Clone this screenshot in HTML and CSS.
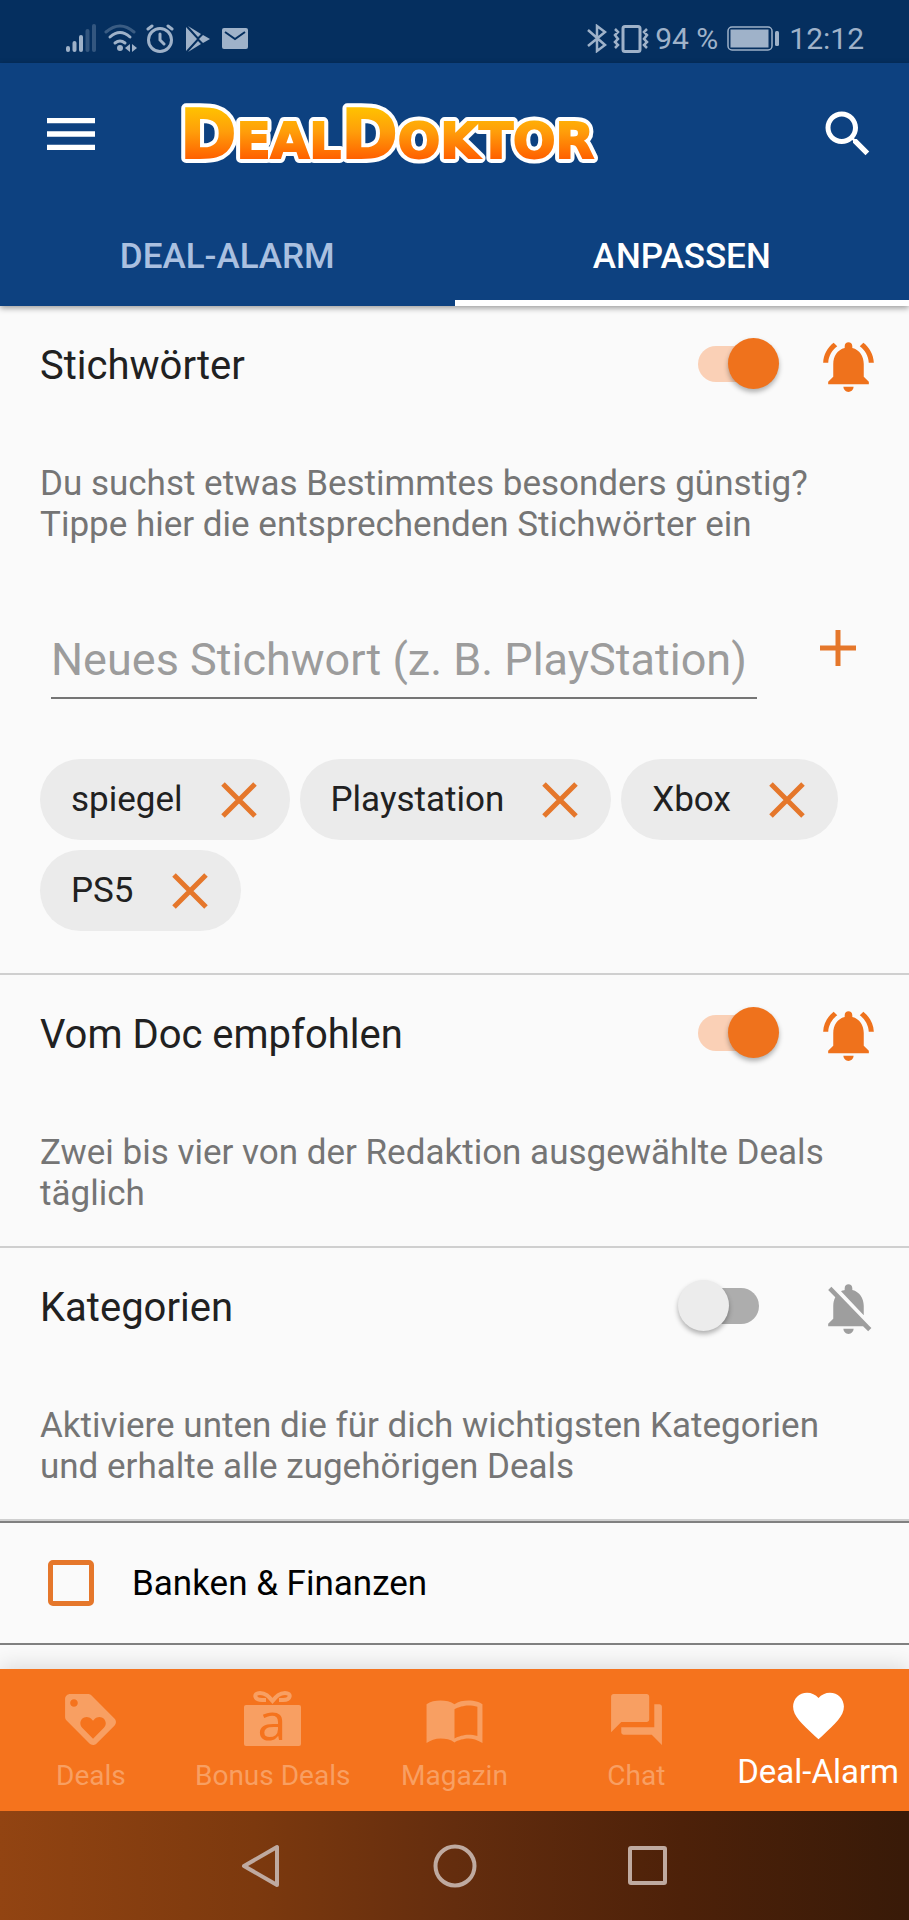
FILE: index.html
```html
<!DOCTYPE html>
<html lang="de">
<head>
<meta charset="utf-8">
<meta name="viewport" content="width=device-width, initial-scale=1">
<title>DealDoktor – Deal-Alarm anpassen</title>
<link rel="stylesheet" href="styles.css">
</head>
<body>
<svg class="sprite" aria-hidden="true">
  <symbol id="bell-on" viewBox="0 0 24 24"><path d="M7.58 4.08L6.15 2.65C3.75 4.48 2.17 7.3 2.03 10.5h2c.15-2.65 1.51-4.97 3.55-6.42zm12.39 6.42h2c-.15-3.2-1.73-6.02-4.12-7.85l-1.42 1.43c2.02 1.45 3.39 3.77 3.54 6.42zM18 11c0-3.07-1.64-5.64-4.5-6.32V4c0-.83-.67-1.5-1.5-1.5s-1.5.67-1.5 1.5v.68C7.63 5.36 6 7.92 6 11v5l-2 2v1h16v-1l-2-2v-5zm-6 11c.14 0 .27-.01.4-.04.65-.14 1.18-.58 1.44-1.18.1-.24.15-.5.15-.78h-4c.01 1.1.9 2 2.01 2z"/></symbol>
  <symbol id="bell-off" viewBox="0 0 24 24"><path d="M20 18.69L7.84 6.14 5.27 3.49 4 4.76l2.8 2.8v.01c-.52.99-.8 2.16-.8 3.42v5l-2 2v1h13.73l2 2L21 19.72l-1-1.03zM12 22c1.11 0 2-.89 2-2h-4c0 1.11.89 2 2 2zm6-7.32V11c0-3.08-1.64-5.64-4.5-6.32V4c0-.83-.67-1.5-1.5-1.5s-1.5.67-1.5 1.5v.68c-.15.03-.29.08-.42.12-.1.03-.2.07-.3.11h-.01c-.01 0-.01 0-.02.01-.23.09-.46.2-.68.31 0 0-.01 0-.01.01L18 14.68z"/></symbol>
  <symbol id="cross" viewBox="0 0 36 36"><path d="M2 2l32 32M34 2L2 34" fill="none" stroke="currentColor" stroke-width="5"/></symbol>
</svg>

<div class="screen">
  <div class="status">
    <div class="status-side">
      <svg width="30" height="29" viewBox="0 0 30 29" fill="currentColor"><rect x="0" y="22" width="4" height="6" rx="2"/><rect x="6.500" y="17" width="4" height="11" rx="2"/><rect x="13" y="11" width="4" height="17" rx="2"/><g opacity=".3"><rect x="19.500" y="5" width="4" height="23" rx="2"/><rect x="26" y="0" width="4" height="28" rx="2"/></g></svg>
      <svg width="34" height="29" viewBox="0 0 34 29" fill="none" stroke="currentColor" stroke-width="3" stroke-linecap="round"><path d="M2 8q14-12 28 0" opacity=".35"/><path d="M6 13q10-9 20 0M11 19q5-4 10 0"/><circle cx="16" cy="24" r="3" fill="currentColor" stroke="none"/><path d="M26 20v8l-5-4zM28 20v8l5-4z" fill="currentColor" stroke="none"/></svg>
      <svg width="28" height="29" viewBox="0 0 28 29" fill="none" stroke="currentColor" stroke-width="3" stroke-linecap="round"><circle cx="14" cy="16" r="11.500"/><path d="M14 10v6l4 4M2 5l4-3M26 5l-4-3"/></svg>
      <svg class="status-gap" width="24" height="26" viewBox="0 0 24 26" fill="currentColor"><path d="M0 1v24l11-12zM2 0l10 11 3-3zM2 26l10-11 3 3zM17 9l-4 4 4 4 7-4z"/></svg>
      <svg class="status-gap" width="26" height="21" viewBox="0 0 26 21"><rect width="26" height="21" rx="2" fill="currentColor"/><path d="M3 4l10 7 10-7" fill="none" stroke="#052f5f" stroke-width="2"/></svg>
    </div>
    <div class="status-side status-right">
      <svg width="20" height="29" viewBox="0 0 20 29" fill="none" stroke="currentColor" stroke-width="2.500"><path d="M1 6l17 15-8 6V2l8 6L1 22"/></svg>
      <svg width="36" height="28" viewBox="0 0 36 28" fill="none" stroke="currentColor" stroke-width="3"><rect x="10" y="1.500" width="17" height="25" rx="2"/><path d="M2 4l3 3-3 3 3 4-3 3 3 3-3 3M34 4l-3 3 3 3-3 4 3 3-3 3 3 3" stroke-width="2.500"/></svg>
      <span>94 %</span>
      <svg class="battery" width="52" height="25" viewBox="0 0 52 25"><rect x="1" y="1" width="44" height="23" rx="4" fill="none" stroke="currentColor" stroke-width="1.500"/><rect x="3.500" y="3.500" width="38" height="18" fill="currentColor"/><rect x="48" y="5" width="4" height="15" rx="1.500" fill="currentColor"/></svg>
      <span>12:12</span>
    </div>
  </div>

  <header class="appbar">
    <div class="toolbar">
      <button class="icon-btn" type="button" aria-label="Menü"><svg width="64" height="64" viewBox="0 0 24 24" fill="currentColor"><path d="M3 18h18v-2H3v2zm0-5h18v-2H3v2zm0-7v2h18V6H3z"/></svg></button>
      <svg class="logo" width="440" height="80" viewBox="0 0 440 80" role="img" aria-label="DealDoktor">
        <defs><linearGradient id="gold" gradientUnits="userSpaceOnUse" x1="0" y1="12" x2="0" y2="64"><stop offset="0" stop-color="#ffc400"/><stop offset=".5" stop-color="#ff9d0a"/><stop offset="1" stop-color="#ff6200"/></linearGradient></defs>
        <text class="logo-edge" x="8" y="64">D<tspan class="logo-small">EAL</tspan>D<tspan class="logo-small">OKTOR</tspan></text>
        <text class="logo-fill" x="8" y="64" fill="url(#gold)" stroke="url(#gold)" aria-hidden="true">D<tspan class="logo-small">EAL</tspan>D<tspan class="logo-small">OKTOR</tspan></text>
      </svg>
      <button class="icon-btn search" type="button" aria-label="Suche"><svg width="60" height="60" viewBox="0 0 24 24" fill="currentColor"><path d="M15.500 14h-.79l-.28-.27C15.410 12.590 16 11.110 16 9.500 16 5.910 13.090 3 9.500 3S3 5.910 3 9.500 5.910 16 9.500 16c1.610 0 3.090-.59 4.230-1.570l.27.28v.79l5 4.990L20.490 19l-4.990-5zm-6 0C7.010 14 5 11.990 5 9.500S7.010 5 9.500 5 14 7.010 14 9.500 11.990 14 9.500 14z"/></svg></button>
    </div>
    <nav class="tabs">
      <a class="tab" href="#alarm">DEAL-ALARM</a>
      <a class="tab tab-active" href="#anpassen" aria-current="page">ANPASSEN</a>
    </nav>
  </header>

  <main class="content">
    <section class="section">
      <div class="section-head">
        <label class="section-title" for="sw-keywords">Stichwörter</label>
        <input class="switch" id="sw-keywords" type="checkbox" role="switch" checked>
        <button class="bell" type="button" aria-label="Benachrichtigung an"><svg width="61" height="61"><use href="#bell-on"/></svg></button>
      </div>
      <p class="desc">Du suchst etwas Bestimmtes besonders günstig? Tippe hier die entsprechenden Stichwörter ein</p>
      <form class="add">
        <input class="add-input" type="text" aria-label="Neues Stichwort" placeholder="Neues Stichwort (z. B. PlayStation)">
        <button class="add-btn" type="button" aria-label="Hinzufügen"><svg width="36" height="36" viewBox="0 0 36 36"><path d="M18 0v36M0 18h36" stroke="currentColor" stroke-width="5"/></svg></button>
      </form>
      <ul class="chips">
        <li class="chip">spiegel <button class="chip-x" type="button" aria-label="spiegel entfernen"><svg width="36" height="36"><use href="#cross"/></svg></button></li>
        <li class="chip">Playstation <button class="chip-x" type="button" aria-label="Playstation entfernen"><svg width="36" height="36"><use href="#cross"/></svg></button></li>
        <li class="chip">Xbox <button class="chip-x" type="button" aria-label="Xbox entfernen"><svg width="36" height="36"><use href="#cross"/></svg></button></li>
        <li class="chip">PS5 <button class="chip-x" type="button" aria-label="PS5 entfernen"><svg width="36" height="36"><use href="#cross"/></svg></button></li>
      </ul>
    </section>

    <section class="section">
      <div class="section-head">
        <label class="section-title" for="sw-doc">Vom Doc empfohlen</label>
        <input class="switch" id="sw-doc" type="checkbox" role="switch" checked>
        <button class="bell" type="button" aria-label="Benachrichtigung an"><svg width="61" height="61"><use href="#bell-on"/></svg></button>
      </div>
      <p class="desc">Zwei bis vier von der Redaktion ausgewählte Deals täglich</p>
    </section>

    <section class="section">
      <div class="section-head">
        <label class="section-title" for="sw-cat">Kategorien</label>
        <input class="switch" id="sw-cat" type="checkbox" role="switch">
        <button class="bell bell-muted" type="button" aria-label="Benachrichtigung aus"><svg width="61" height="61"><use href="#bell-off"/></svg></button>
      </div>
      <p class="desc">Aktiviere unten die für dich wichtigsten Kategorien und erhalte alle zugehörigen Deals</p>
    </section>

    <label class="category"><input class="box" type="checkbox"> Banken &amp; Finanzen</label>
  </main>

  <nav class="bottom">
    <a class="item" href="#deals"><svg width="61" height="61" viewBox="0 0 24 24"><path d="M21.410 11.580l-9-9C12.050 2.220 11.550 2 11 2H4c-1.100 0-2 .9-2 2v7c0 .55.22 1.050.59 1.420l9 9c.36.36.86.58 1.410.58.55 0 1.050-.22 1.410-.59l7-7c.37-.36.59-.86.59-1.410 0-.55-.23-1.060-.59-1.420zM5.500 7C4.670 7 4 6.330 4 5.500S4.670 4 5.500 4 7 4.670 7 5.500 6.330 7 5.500 7zm11.770 8.270L13 19.540l-4.270-4.270C8.280 14.810 8 14.190 8 13.500c0-1.380 1.120-2.500 2.500-2.500.69 0 1.320.28 1.770.74l.73.72.73-.73c.45-.45 1.080-.73 1.770-.73 1.380 0 2.500 1.120 2.500 2.500 0 .69-.28 1.320-.73 1.770z"/></svg><span>Deals</span></a>
    <a class="item" href="#bonus"><svg class="gift" width="61" height="61" viewBox="0 0 61 61"><rect x="2" y="16" width="57" height="41" rx="2"/><path d="M24 11H20C12 11 11 4 18 4C24 4 27 8 30.500 12C34 8 37 4 43 4C50 4 49 11 41 11H37" fill="none" stroke="currentColor" stroke-width="4"/><text class="gift-letter" x="30" y="51">a</text></svg><span>Bonus Deals</span></a>
    <a class="item" href="#magazin"><svg width="61" height="61" viewBox="0 0 24 24"><path d="M21 5c-1.110-.35-2.330-.5-3.500-.5-1.950 0-4.050.4-5.500 1.500-1.450-1.100-3.550-1.500-5.500-1.500S2.450 4.900 1 6v15.200c1.500-.9 3.500-1.700 5.500-1.700 1.950 0 4.050.4 5.500 1.500 1.350-.85 3.800-1.500 5.500-1.500 1.650 0 3.350.6 5.500 1.700V6c-.6-.45-1.250-.75-2-1zm0 13.500c-1.100-.35-2.300-.5-3.500-.5-1.700 0-4.150.65-5.500 1.500V8c1.350-.85 3.800-1.500 5.500-1.500 1.200 0 2.400.15 3.500.5v11.500z"/></svg><span>Magazin</span></a>
    <a class="item" href="#chat"><svg width="61" height="61" viewBox="0 0 24 24"><path d="M21 6h-2v9H6v2c0 .55.45 1 1 1h11l4 4V7c0-.55-.45-1-1-1zm-4 6V3c0-.55-.45-1-1-1H3c-.55 0-1 .45-1 1v14l4-4h10c.55 0 1-.45 1-1z"/></svg><span>Chat</span></a>
    <a class="item item-active" href="#alarm" aria-current="page"><svg width="61" height="61" viewBox="0 0 24 24"><path d="M12 21.350l-1.450-1.320C5.400 15.360 2 12.280 2 8.500 2 5.420 4.420 3 7.500 3c1.740 0 3.410.81 4.500 2.090C13.090 3.810 14.760 3 16.500 3 19.580 3 22 5.420 22 8.500c0 3.780-3.400 6.860-8.550 11.540L12 21.350z"/></svg><span>Deal-Alarm</span></a>
  </nav>

  <div class="sysbar">
    <button class="sys-btn" type="button" aria-label="Zurück"><svg width="44" height="44" viewBox="0 0 44 44"><path d="M37 3v38L4 22z"/></svg></button>
    <button class="sys-btn" type="button" aria-label="Startbildschirm"><svg width="44" height="44" viewBox="0 0 44 44"><circle cx="22" cy="22" r="19.500"/></svg></button>
    <button class="sys-btn" type="button" aria-label="Übersicht"><svg width="44" height="44" viewBox="0 0 44 44"><rect x="4" y="4" width="35" height="35" rx="1"/></svg></button>
  </div>
</div>
</body>
</html>
```
FILE: styles.css
```css
* { box-sizing: border-box; }

body {
  margin: 0;
  background: #fafafa;
  color: #212121;
  font-family: Roboto, "Liberation Sans", sans-serif;
}

button {
  padding: 0;
  border: 0;
  background: none;
  color: inherit;
  font: inherit;
}

svg { display: block; flex: none; }
a { color: inherit; text-decoration: none; }

.sprite { display: none; }

.screen {
  display: flex;
  flex-direction: column;
  min-height: 100vh;
}

/* Status bar */
.status {
  display: flex;
  justify-content: space-between;
  align-items: center;
  height: 63px;
  padding: 14px 45px 0 66px;
  background: #052f5f;
  color: #9fb2c9;
  font-size: 30px;
}
.status-side { display: flex; align-items: center; gap: 8px; }
.status-right { gap: 6px; }
.status-gap { margin-left: 4px; }
.battery { margin: 0 4px 0 3px; }

/* App bar */
.appbar {
  position: relative;
  background: #0d4180;
  color: #fff;
  box-shadow: 0 2px 6px rgba(0, 0, 0, .4);
}
.toolbar {
  display: flex;
  align-items: center;
  height: 141px;
  padding: 0 31px 0 39px;
}
.logo { margin-left: 69px; overflow: visible; }
.logo text { font-family: "DejaVu Sans", sans-serif; font-size: 68px; font-weight: 700; }
.logo .logo-small { font-size: 50px; }
.logo-edge { fill: #fff; stroke: #fff; stroke-width: 10px; stroke-linejoin: round; }
.logo-fill { stroke-width: 2px; }
.search { margin-left: auto; }

.tabs { display: grid; grid-template-columns: 1fr 1fr; }
.tab {
  height: 102px;
  border-bottom: 6px solid transparent;
  color: #aac0e0;
  font-size: 35px;
  font-weight: 500;
  line-height: 106px;
  text-align: center;
}
.tab-active { border-color: #fff; color: #fff; }

/* Settings */
.content { flex: 1; }
.section { padding-bottom: 32px; border-bottom: 2px solid #cfcfcf; }
.section-head {
  display: flex;
  align-items: center;
  height: 115px;
  padding: 0 30px 0 40px;
}
.section-title { flex: 1; padding-top: 3px; font-size: 40px; }

.switch {
  appearance: none;
  position: relative;
  width: 72px;
  height: 36px;
  margin: 0 48px 0 0;
  border-radius: 18px;
  background: #adadad;
}
.switch::before {
  content: "";
  position: absolute;
  top: -8px;
  left: -9px;
  width: 51px;
  height: 51px;
  border-radius: 50%;
  background: #ececec;
  box-shadow: 0 3px 5px rgba(0, 0, 0, .3);
}
.switch:not(:checked) { margin-right: 59px; }
.switch:checked { background: #fad0b6; }
.switch:checked::before { left: 30px; background: #ef721c; }

.bell { padding-top: 5px; color: #ef721c; }
.bell svg, .item svg { fill: currentColor; }
.bell-muted { color: #9e9e9e; }

.desc {
  margin: 0;
  padding: 42px 40px 0;
  color: #757575;
  font-size: 35px;
  line-height: 41px;
}

.add {
  display: flex;
  align-items: flex-start;
  gap: 63px;
  padding: 76px 53px 0 51px;
}
.add-input {
  flex: 1;
  min-width: 0;
  height: 78px;
  padding: 0;
  border: 0;
  border-bottom: 2px solid #757575;
  border-radius: 0;
  background: none;
  font: 45px Roboto, "Liberation Sans", sans-serif;
}
.add-input::placeholder { color: #9c9c9c; opacity: 1; }
.add-btn { padding-top: 9px; color: #e5772b; }

.chips {
  display: flex;
  flex-wrap: wrap;
  gap: 10px;
  margin: 0;
  padding: 60px 40px 10px;
  list-style: none;
}
.chip {
  display: flex;
  align-items: center;
  gap: 38px;
  height: 81px;
  padding: 0 33px 0 31px;
  border-radius: 41px;
  background: #ebebeb;
  font-size: 35px;
}
.chip-x { color: #e5772b; }

.category {
  display: flex;
  align-items: center;
  gap: 38px;
  height: 124px;
  padding-left: 48px;
  border-top: 2px solid #808080;
  border-bottom: 2px solid #808080;
  color: #000;
  font-size: 35px;
}
.box {
  appearance: none;
  width: 46px;
  height: 46px;
  margin: 0;
  border: 5px solid #e5772b;
  border-radius: 5px;
}

/* Bottom navigation */
.bottom {
  display: grid;
  grid-template-columns: repeat(5, 1fr);
  height: 142px;
  background: #f5731d;
  color: #fff;
  box-shadow: 0 -4px 20px rgba(0, 0, 0, .12);
}
.item {
  display: flex;
  flex-direction: column;
  align-items: center;
  gap: 8px;
  padding-top: 20px;
  color: #f89f62;
  font-size: 28px;
  line-height: 36px;
  white-space: nowrap;
}
.item-active { padding-top: 16px; color: #fff; font-size: 33px; }
.gift { overflow: visible; }
.gift-letter {
  fill: #f5731d;
  font-family: "Open Sans", sans-serif;
  font-size: 52px;
  font-weight: 500;
  text-anchor: middle;
}

/* System navigation */
.sysbar {
  display: flex;
  justify-content: center;
  align-items: center;
  gap: 149px;
  height: 109px;
  background: linear-gradient(90deg, #924412, #7c390e 28%, #642d0e 50%, #4d2109 75%, #381a08);
}
.sys-btn svg { fill: none; stroke: #bfaaa0; stroke-width: 4; stroke-linejoin: round; }
```
